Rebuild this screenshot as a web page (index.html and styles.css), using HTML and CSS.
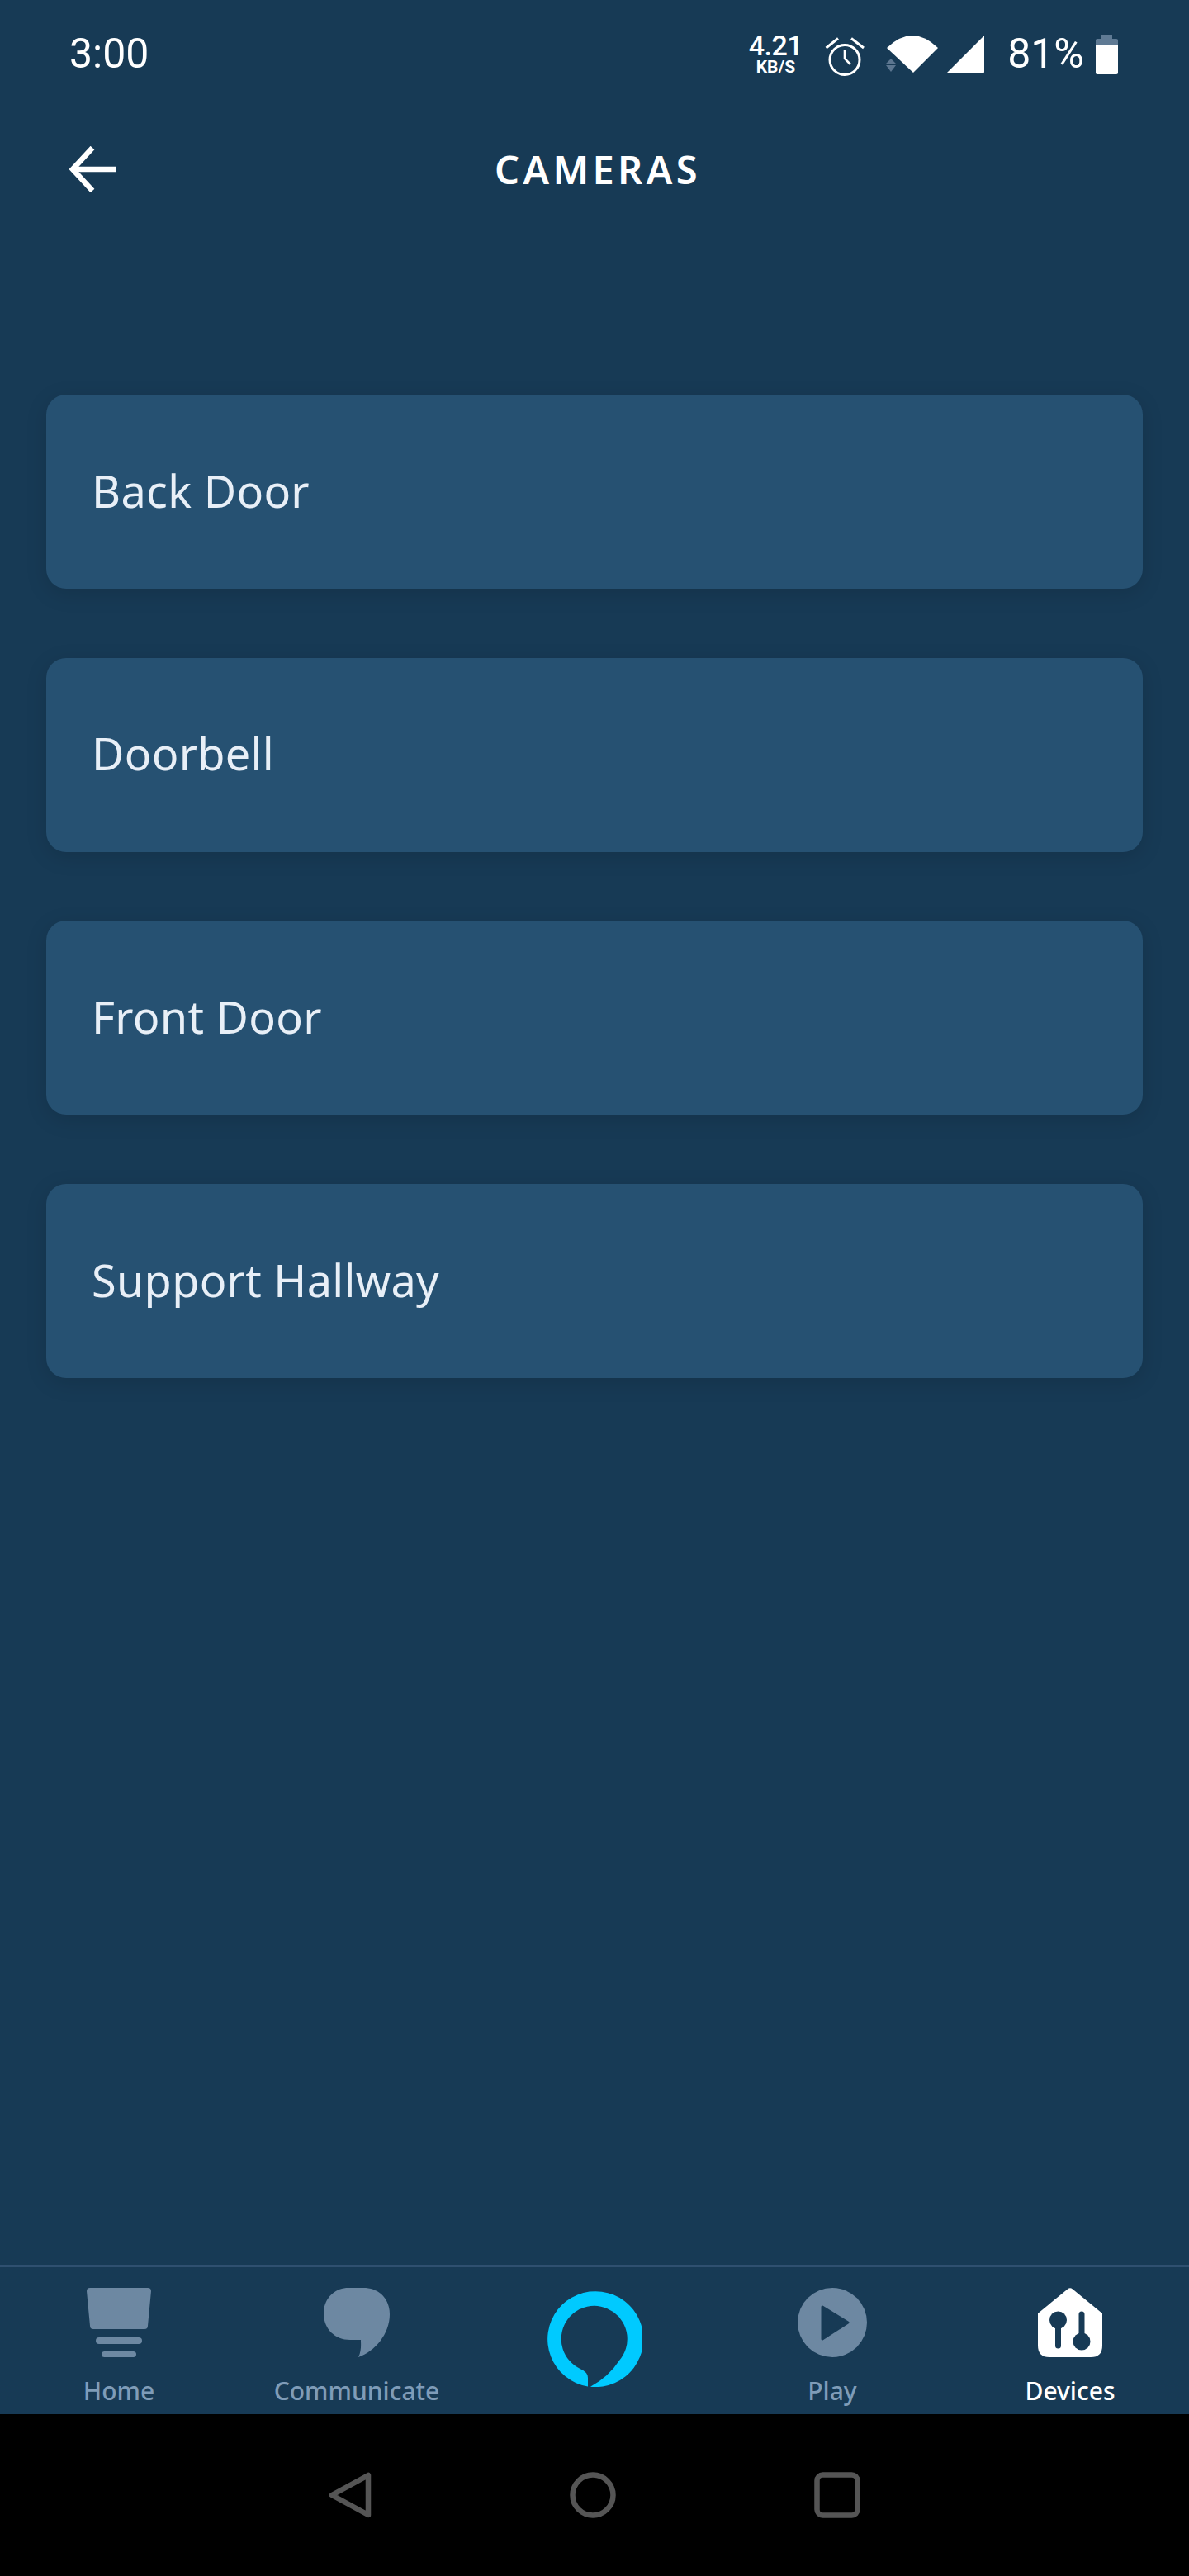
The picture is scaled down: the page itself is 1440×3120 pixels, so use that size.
FILE: index.html
```html
<!DOCTYPE html>
<html lang="en">
<head>
  <meta charset="UTF-8" />
  <meta name="viewport" content="width=device-width, initial-scale=1.0"/>
  <title>Cameras</title>
  <link rel="stylesheet" href="styles.css">
</head>
<body>
  <div class="screen">
    <div class="status-bar">
      <span class="clock">3:00</span>
      <div class="status-icons">
        <div class="speed">
          <span class="speed-value">4.21</span>
          <span class="speed-unit">KB/S</span>
        </div>
        <svg class="icon-alarm" width="48" height="50" viewBox="0 0 48 50" fill="none" stroke="#fff" stroke-width="3">
          <circle cx="24" cy="29.5" r="18"/>
          <path d="M1.5 15L16 3.5M32 3.5L47 15"/>
          <path d="M24 17V28L31 35" stroke-width="2.6"/>
        </svg>
        <svg class="icon-wifi" width="64" height="46" viewBox="0 0 64 46">
          <path d="M1 15Q32 -15 63 15L33 45Z" fill="#fff"/>
          <path d="M0 34L6 28L12 34ZM0 36H12L6 44Z" fill="#5c7690"/>
        </svg>
        <svg class="icon-signal" width="46" height="46" viewBox="0 0 46 46">
          <path d="M46 0V44Q46 46 44 46H1Q0 46 1 45Z" fill="#fff"/>
        </svg>
        <span class="battery-text">81%</span>
        <svg class="icon-battery" width="27" height="48" viewBox="0 0 27 48">
          <path d="M7 0H20V5H25Q27 5 27 7V13H0V7Q0 5 2 5H7Z" fill="#5f7a94"/>
          <path d="M0 13H27V46Q27 48 25 48H2Q0 48 0 46Z" fill="#fff"/>
        </svg>
      </div>
    </div>

    <div class="top-bar">
      <svg class="back-arrow" width="56" height="56" viewBox="0 0 56 56" fill="none" stroke="#fff" stroke-width="6.5">
        <path d="M56 28H4"/>
        <path d="M28 2L4 28L28 54" stroke-linejoin="miter"/>
      </svg>
      <h1>CAMERAS</h1>
    </div>

    <div class="camera-list">
      <div class="camera-card">Back Door</div>
      <div class="camera-card">Doorbell</div>
      <div class="camera-card">Front Door</div>
      <div class="camera-card">Support Hallway</div>
    </div>

    <div class="tab-bar">
      <div class="tab">
        <svg width="78" height="84" viewBox="0 0 78 84">
          <path d="M4 0H74Q78 0 78 4L74 46Q74 50 70 50H8Q4 50 4 46L0 4Q0 0 4 0Z" fill="#6d88a2"/>
          <rect x="11" y="60" width="56" height="8" rx="4" fill="#6d88a2"/>
          <rect x="18" y="77" width="42" height="7" rx="3.5" fill="#6d88a2"/>
        </svg>
        <span>Home</span>
      </div>
      <div class="tab">
        <svg width="80" height="84" viewBox="0 0 80 84">
          <path d="M30 0H48C68 0 80 14 80 32C80 56 62 77 42 84C46 76 45 68 45 63H32C14 63 0 50 0 31C0 13 13 0 30 0Z" fill="#6d88a2"/>
        </svg>
        <span>Communicate</span>
      </div>
      <div class="tab tab-alexa">
        <svg width="116" height="116" viewBox="0 0 116 116">
          <path d="M50 115.4A58 58 0 1 1 53 115.8Q75 104 88 84A40 40 0 1 0 41 94.2Q50 98 50 105Z" fill="#00caff"/>
        </svg>
      </div>
      <div class="tab">
        <svg width="84" height="84" viewBox="0 0 84 84">
          <circle cx="42" cy="42" r="42" fill="#6d88a2"/>
          <path d="M30 23L61 42L30 62Z" fill="#173a55" stroke="#173a55" stroke-width="3" stroke-linejoin="round"/>
        </svg>
        <span>Play</span>
      </div>
      <div class="tab tab-active">
        <svg width="78" height="84" viewBox="0 0 78 84">
          <path d="M36 1.5Q39 -1 42 1.5L78 31V70Q78 84 64 84H14Q0 84 0 70V31Z" fill="#fff"/>
          <circle cx="24.5" cy="39" r="10.5" fill="#173a55"/>
          <path d="M24.5 42V70M53 32V62" stroke="#173a55" stroke-width="7" stroke-linecap="round"/>
          <circle cx="53" cy="65" r="10.5" fill="#173a55"/>
        </svg>
        <span>Devices</span>
      </div>
    </div>

    <div class="nav-bar">
      <svg width="52" height="56" viewBox="0 0 52 56" fill="none" stroke="#555" stroke-width="6.5" stroke-linejoin="round">
        <path d="M48 4V52L4 28Z"/>
      </svg>
      <svg width="56" height="56" viewBox="0 0 56 56" fill="none" stroke="#555" stroke-width="6.5">
        <circle cx="28" cy="28" r="24.5"/>
      </svg>
      <svg width="56" height="56" viewBox="0 0 56 56" fill="none" stroke="#555" stroke-width="6.5">
        <rect x="3.5" y="3.5" width="49" height="49" rx="7"/>
      </svg>
    </div>
  </div>
</body>
</html>
```

FILE: styles.css
```css
* {
  box-sizing: border-box;
}
body {
  margin: 0;
  background: #173a55;
  font-family: "Noto Sans", sans-serif;
  color: #fff;
}
.screen {
  width: 1440px;
  height: 3120px;
  display: flex;
  flex-direction: column;
  background: #173a55;
}

/* status bar */
.status-bar {
  height: 130px;
  padding: 0 86px 0 84px;
  display: flex;
  align-items: center;
  justify-content: space-between;
  font-family: Roboto, sans-serif;
}
.clock,
.battery-text {
  font-size: 50px;
  font-weight: 400;
  line-height: 60px;
}
.status-icons {
  display: flex;
  align-items: center;
}
.speed {
  display: flex;
  flex-direction: column;
  align-items: center;
  font-weight: 700;
}
.speed-value {
  font-size: 34px;
  line-height: 32px;
  font-weight: 500;
  letter-spacing: -0.5px;
}
.speed-unit {
  font-size: 21px;
  line-height: 20px;
}
.icon-alarm {
  margin-left: 27px;
  margin-top: 6px;
}
.icon-wifi {
  margin-left: 26px;
  margin-top: 2px;
}
.icon-signal {
  margin-left: 9px;
  margin-top: 2px;
}
.battery-text {
  margin-left: 28px;
}
.icon-battery {
  margin-left: 14px;
  margin-top: 2px;
}

/* header */
.top-bar {
  height: 150px;
  padding-left: 84px;
  display: flex;
  align-items: center;
}
.top-bar h1 {
  margin: 0;
  flex: 1;
  padding-right: 132px;
  text-align: center;
  font-size: 47px;
  font-weight: 600;
  letter-spacing: 4.4px;
  line-height: 60px;
}

/* list */
.camera-list {
  flex: 1;
  padding: 198px 56px 0;
  display: flex;
  flex-direction: column;
  gap: 83.7px;
}
.camera-card {
  height: 235px;
  padding: 0 0 4px 55px;
  display: flex;
  align-items: center;
  background: #265172;
  border-radius: 24px;
  box-shadow: 0 6px 26px rgba(0, 0, 0, 0.13);
  color: #e8eff7;
  font-size: 54px;
  letter-spacing: 0.3px;
}

/* bottom tabs */
.tab-bar {
  height: 181px;
  border-top: 3px solid #2f5070;
  display: grid;
  grid-template-columns: repeat(5, 1fr);
}
.tab {
  padding-top: 25px;
  display: flex;
  flex-direction: column;
  align-items: center;
  color: #7f9cb8;
  font-size: 30px;
  font-weight: 500;
  line-height: 40px;
}
.tab span {
  margin-top: 21px;
}
.tab-alexa {
  padding-top: 29px;
}
.tab-active {
  color: #fff;
}

/* android nav */
.nav-bar {
  height: 196px;
  background: #000;
  display: flex;
  align-items: center;
  justify-content: center;
  gap: 240px;
}
```
